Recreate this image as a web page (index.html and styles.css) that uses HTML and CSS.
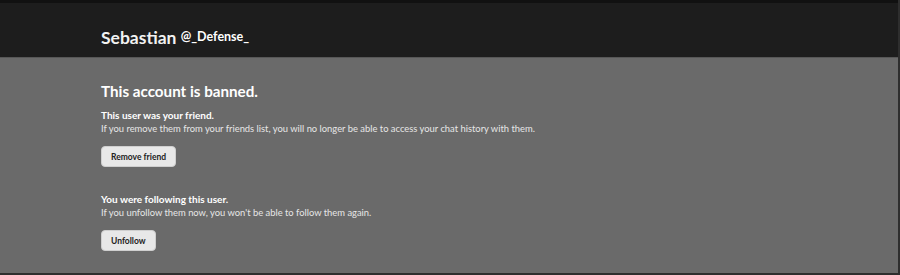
FILE: index.html
```html
<!DOCTYPE html>
<html>
  <head>
    <title>Sebastian - Banned</title>
    <link rel="stylesheet" href="styles.css">
  </head>
  <body>
    <div class="page">
      <div class="header">
        <h1 class="name">Sebastian <span class="handle">@_Defense_</span></h1>
      </div>
      <div class="content">
        <h2 class="title">This account is banned.</h2>
        <div class="block">
          <p class="bold">This user was your friend.</p>
          <p class="desc">If you remove them from your friends list, you will no longer be able to access your chat history with them.</p>
          <button class="btn">Remove friend</button>
        </div>
        <div class="block">
          <p class="bold">You were following this user.</p>
          <p class="desc">If you unfollow them now, you won't be able to follow them again.</p>
          <button class="btn">Unfollow</button>
        </div>
      </div>
    </div>
  </body>
</html>
```
FILE: styles.css
```css
body {
  margin: 0;
  background-color: #2e2e2e;
  font-family: Lato, "Noto Sans", Arial, sans-serif;
}

div.page {
  width: 898px;
  height: 273px;
  border-top: 3px solid #111111;
  background-color: #6a6a6a;
  box-sizing: border-box;
  overflow: hidden;
}

div.header {
  background-color: #1d1d1d;
  height: 54px;
  border-bottom: 1px solid #575757;
  padding-left: 101px;
  display: flex;
  align-items: flex-end;
}

h1.name {
  margin: 0 0 9px 0;
  color: #f2f2f2;
  font-size: 17.5px;
  font-weight: bold;
}

h1.name span.handle {
  font-size: 12.5px;
  color: white;
  vertical-align: 3px;
}

div.content {
  padding: 24px 0 0 101px;
}

h2.title {
  margin: 0 0 8px 0;
  font-size: 15.2px;
  color: white;
}

div.block {
  margin-bottom: 25px;
}

p {
  margin: 0;
  font-size: 9.4px;
  line-height: 14px;
  color: #e6e6e6;
}

p.bold {
  font-size: 10px;
  font-weight: bold;
  color: white;
}

button.btn {
  margin-top: 10px;
  height: 21px;
  padding: 0 9px;
  border: 1px solid #cfcfcf;
  border-radius: 4px;
  background-color: #e8e8e8;
  color: #222222;
  font-family: inherit;
  font-size: 8.5px;
  font-weight: bold;
}
```
